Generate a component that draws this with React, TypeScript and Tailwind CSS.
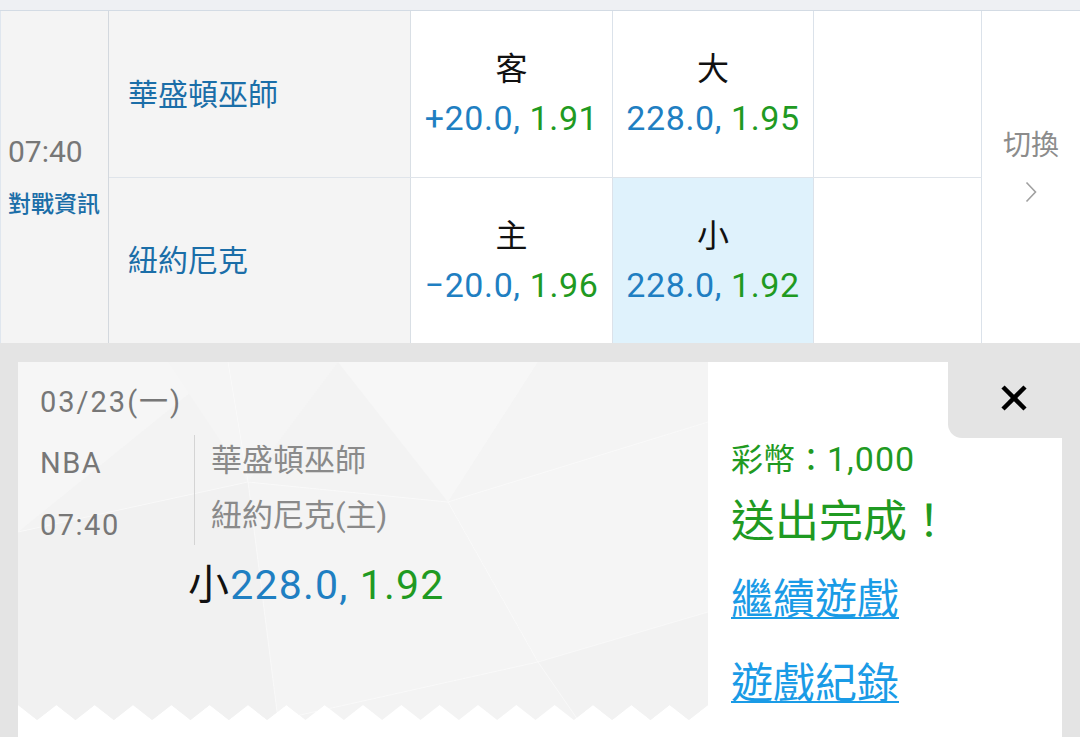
import React from 'react';

function OddsCell({ label, line, odds, highlight, w }: { label: string; line: string; odds: string; highlight?: boolean; w: string }) {
  return (
    <div className={`${w} h-full border-r border-[#dbe2ea] flex flex-col items-center justify-center ${highlight ? 'bg-[#dff2fc]' : 'bg-white'}`}>
      <div className="text-[32px] leading-[38px] text-[#111]">{label}</div>
      <div className="mt-[10px] text-[34px] leading-[40px] tracking-[0.6px] whitespace-nowrap">
        <span className="text-[#1f7fc2]">{line}, </span>
        <span className="text-[#1f9a22]">{odds}</span>
      </div>
    </div>
  );
}

function Pattern() {
  const W = 690;
  const H = 358;
  const T = 15;
  const n = 18;
  const p = W / n;
  let d = `M0,0 H${W} V${H - T}`;
  for (let i = n; i > 0; i--) {
    d += ` L${((i - 0.5) * p).toFixed(2)},${H} L${((i - 1) * p).toFixed(2)},${H - T}`;
  }
  d += ' Z';
  return (
    <svg className="absolute inset-0" width={W} height={H} viewBox={`0 0 ${W} ${H}`}>
      <defs>
        <clipPath id="zz">
          <path d={d} />
        </clipPath>
      </defs>
      <g clipPath="url(#zz)">
        <rect x="0" y="0" width={W} height={H} fill="#f3f3f3" />
        <polygon points="0,0 210,0 0,170" fill="#f6f6f6" />
        <polygon points="150,0 320,0 230,120" fill="#f5f5f5" />
        <polygon points="320,0 520,0 430,140" fill="#f7f7f7" />
        <polygon points="430,140 690,60 690,250 520,300" fill="#f5f5f5" />
        <polygon points="0,170 230,120 260,358 0,358" fill="#f1f1f1" />
        <polygon points="230,120 430,140 520,300 260,358" fill="#f4f4f4" />
        <polygon points="520,300 690,250 690,358 560,358" fill="#f2f2f2" />
        <polygon points="520,0 690,0 690,60 430,140" fill="#f4f4f4" />
        <g stroke="#ffffff" strokeWidth="1" opacity="0.45" fill="none">
          <polyline points="0,170 230,120 430,140 690,60" />
          <polyline points="210,0 230,120 260,358" />
          <polyline points="430,140 520,300 560,358" />
          <polyline points="260,358 520,300 690,250" />
        </g>
      </g>
    </svg>
  );
}

export default function App() {
  return (
    <div className="w-[1080px] h-[737px] overflow-hidden bg-[#e4e4e4] font-['Roboto','Noto_Sans_CJK_TC',sans-serif]">
      <div className="h-[11px] bg-[#eef0f3] border-b border-[#d3dbe4]" />
      <div className="flex h-[332px] border-l border-[#dfe6ee]">
        <div className="w-[108px] shrink-0 bg-[#f4f4f4] border-r border-[#d3d8de] flex flex-col justify-center pl-[7px]">
          <div className="text-[30px] leading-[34px] text-[#777]">07:40</div>
          <div className="mt-[22px] text-[23px] leading-[28px] text-[#1b6ea8] font-medium whitespace-nowrap">對戰資訊</div>
        </div>
        <div className="flex flex-col">
          <div className="flex h-[167px] border-b border-[#dfe4ea]">
            <div className="w-[302px] h-full bg-[#f4f4f4] border-r border-[#d9dfe5] flex items-center pl-[19px] text-[30px] text-[#1b6ea8]">華盛頓巫師</div>
            <OddsCell w="w-[202px]" label="客" line="+20.0" odds="1.91" />
            <OddsCell w="w-[201px]" label="大" line="228.0" odds="1.95" />
            <div className="w-[168px] h-full bg-white border-r border-[#dbe2ea]" />
          </div>
          <div className="flex h-[165px]">
            <div className="w-[302px] h-full bg-[#f4f4f4] border-r border-[#d9dfe5] flex items-center pl-[19px] text-[30px] text-[#1b6ea8]">紐約尼克</div>
            <OddsCell w="w-[202px]" label="主" line="−20.0" odds="1.96" />
            <OddsCell w="w-[201px]" label="小" line="228.0" odds="1.92" highlight />
            <div className="w-[168px] h-full bg-white border-r border-[#dbe2ea]" />
          </div>
        </div>
        <div className="flex-1 bg-white flex flex-col items-center justify-center pb-[22px]">
          <div className="text-[28px] leading-[34px] text-[#8c8c8c]">切換</div>
          <svg className="mt-[18px]" width="12" height="22" viewBox="0 0 12 22">
            <polyline points="1.5,1.5 10.5,11 1.5,20.5" fill="none" stroke="#a0a0a0" strokeWidth="1.6" />
          </svg>
        </div>
      </div>
      <div className="mt-[19px] ml-[18px] w-[1044px] h-[400px] bg-white flex">
        <div className="relative w-[690px] h-[358px] shrink-0">
          <Pattern />
          <div className="relative pt-[24px] pl-[22px]">
            <div className="text-[29px] leading-[32px] tracking-[2px] text-[#777]">03/23(一)</div>
            <div className="mt-[17px] flex h-[110px]">
              <div className="w-[155px] border-r border-[#d4d4d4] pt-[10px] text-[29px] leading-[36px] tracking-[1.5px] text-[#777]">
                <div>NBA</div>
                <div className="mt-[26px]">07:40</div>
              </div>
              <div className="pl-[16px] pt-[8px] text-[31px] leading-[36px] text-[#8a8a8a]">
                <div>華盛頓巫師</div>
                <div className="mt-[19px]">紐約尼克(主)</div>
              </div>
            </div>
            <div className="mt-[16px] ml-[148px] text-[41px] leading-[48px] tracking-[1.2px] whitespace-nowrap">
              <span className="text-[#111]">小</span>
              <span className="text-[#1f7fc2]">228.0, </span>
              <span className="text-[#1f9a22]">1.92</span>
            </div>
          </div>
        </div>
        <div className="flex-1 flex flex-col">
          <div className="flex justify-end">
            <div className="w-[114px] h-[76px] bg-[#e4e4e4] rounded-bl-[14px] flex items-center justify-center pl-[18px] pb-[4px]">
              <svg width="28" height="28" viewBox="0 0 28 28">
                <line x1="3" y1="3" x2="25" y2="25" stroke="#000" strokeWidth="4.5" />
                <line x1="25" y1="3" x2="3" y2="25" stroke="#000" strokeWidth="4.5" />
              </svg>
            </div>
          </div>
          <div className="pl-[23px]">
            <div className="mt-[3px] text-[32px] leading-[36px] text-[#1f9a22] whitespace-nowrap">彩幣：<span className="text-[34px] tracking-[1px]">1,000</span></div>
            <div className="mt-[19px] text-[44px] leading-[50px] text-[#1f9a22] whitespace-nowrap">送出完成！</div>
            <div className="mt-[29px] text-[42px] leading-[48px] text-[#1a9be6] underline decoration-2 underline-offset-[3px] whitespace-nowrap">繼續遊戲</div>
            <div className="mt-[36px] text-[42px] leading-[48px] text-[#1a9be6] underline decoration-2 underline-offset-[3px] whitespace-nowrap">遊戲紀錄</div>
          </div>
        </div>
      </div>
    </div>
  );
}
